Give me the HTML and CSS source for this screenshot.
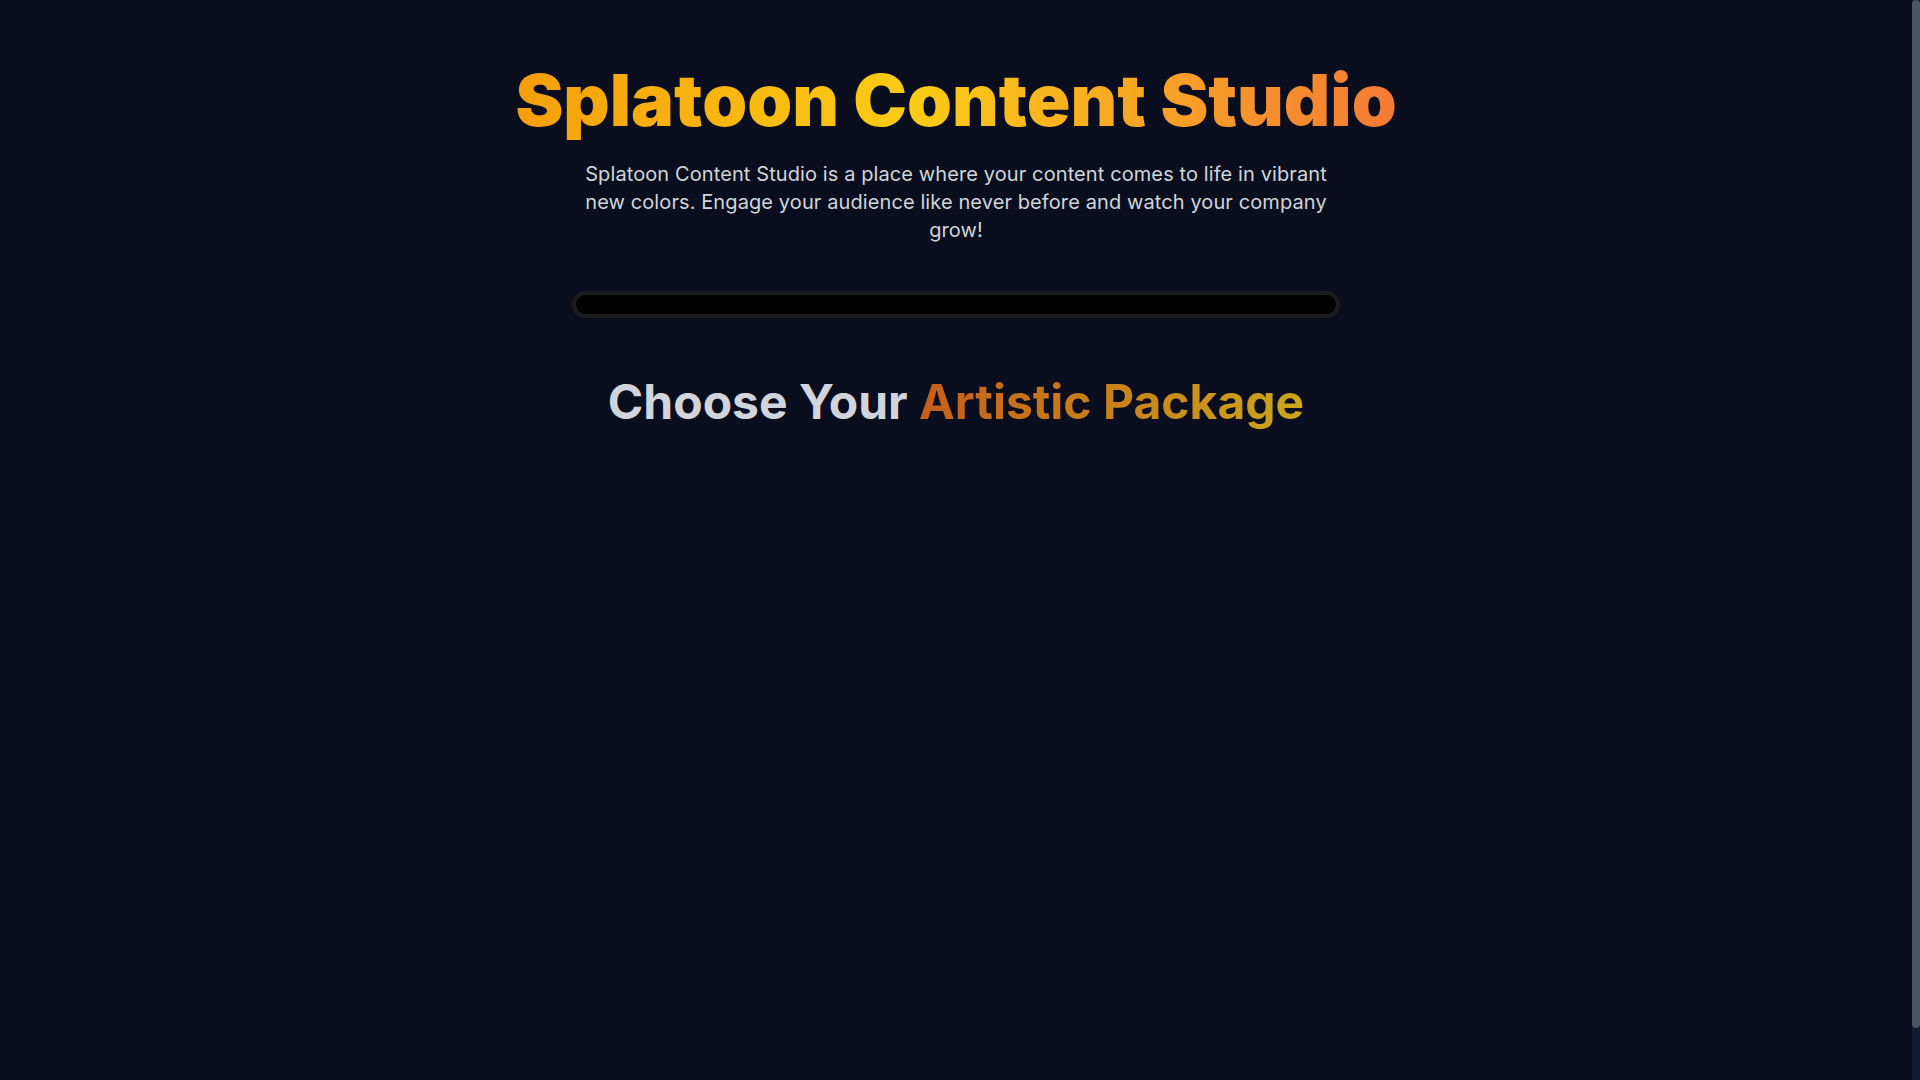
FILE: index.html
```html
<!DOCTYPE html>
<html lang="en">
<head>
<meta charset="utf-8">
<title>Splatoon Content Studio</title>
<link rel="stylesheet" href="styles.css">
</head>
<body>
<main class="page">
  <header class="hero">
    <h1 class="title">Splatoon Content Studio</h1>
    <p class="lead">Splatoon Content Studio is a place where your content comes to life in vibrant new colors. Engage your audience like never before and watch your company grow!</p>
    <div class="progress"><div class="progress-fill"></div></div>
  </header>
  <section class="packages">
    <h2 class="packages-title">Choose Your <span class="accent">Artistic Package</span></h2>
    <div class="packages-grid"></div>
  </section>
</main>
<div class="scrollbar" aria-hidden="true"><div class="scrollbar-thumb"></div></div>
</body>
</html>
```

FILE: styles.css
```css
html {
  background: #0a0e1f;
  overflow: hidden;
}
body {
  margin: 0;
  padding-right: 8px;
  background: #0a0e1f;
  font-family: Inter, "Noto Sans", sans-serif;
  color: #d1d5db;
}
.page {
  display: flex;
  flex-direction: column;
  align-items: center;
  padding: 64px 16px 0;
}
.hero {
  display: flex;
  flex-direction: column;
  align-items: center;
  width: 768px;
}
.title {
  margin: 0;
  padding-bottom: 4px;
  font-size: 72px;
  line-height: 1;
  font-weight: 900;
  background: linear-gradient(90deg, #f59e0b 0%, #facc15 45%, #f47a36 100%);
  -webkit-background-clip: text;
  background-clip: text;
  color: transparent;
  white-space: nowrap;
}
.lead {
  margin: 20px 0 0;
  font-size: 20px;
  line-height: 28px;
  letter-spacing: 0.1px;
  text-align: center;
  color: #d1d5db;
}
.progress {
  margin-top: 47px;
  width: 100%;
  box-sizing: border-box;
  height: 27px;
  border: 4px solid #1c1c1e;
  border-radius: 9999px;
  background: #000;
  overflow: hidden;
}
.progress-fill {
  width: 0;
  height: 100%;
}
.packages {
  margin-top: 53px;
  display: flex;
  flex-direction: column;
  align-items: center;
  width: 100%;
}
.packages-title {
  margin: 0;
  font-size: 48px;
  line-height: 1.3;
  font-weight: 700;
  color: #d1d5db;
}
.accent {
  display: inline-block;
  background: linear-gradient(90deg, #c65e1a 0%, #cca61a 100%);
  -webkit-background-clip: text;
  background-clip: text;
  color: transparent;
}
.scrollbar {
  position: fixed;
  top: 0;
  right: 0;
  width: 8px;
  height: 100vh;
  background: #151a33;
}
.scrollbar-thumb {
  height: 1028px;
  background: #4b5563;
  border-radius: 4px;
}
```
